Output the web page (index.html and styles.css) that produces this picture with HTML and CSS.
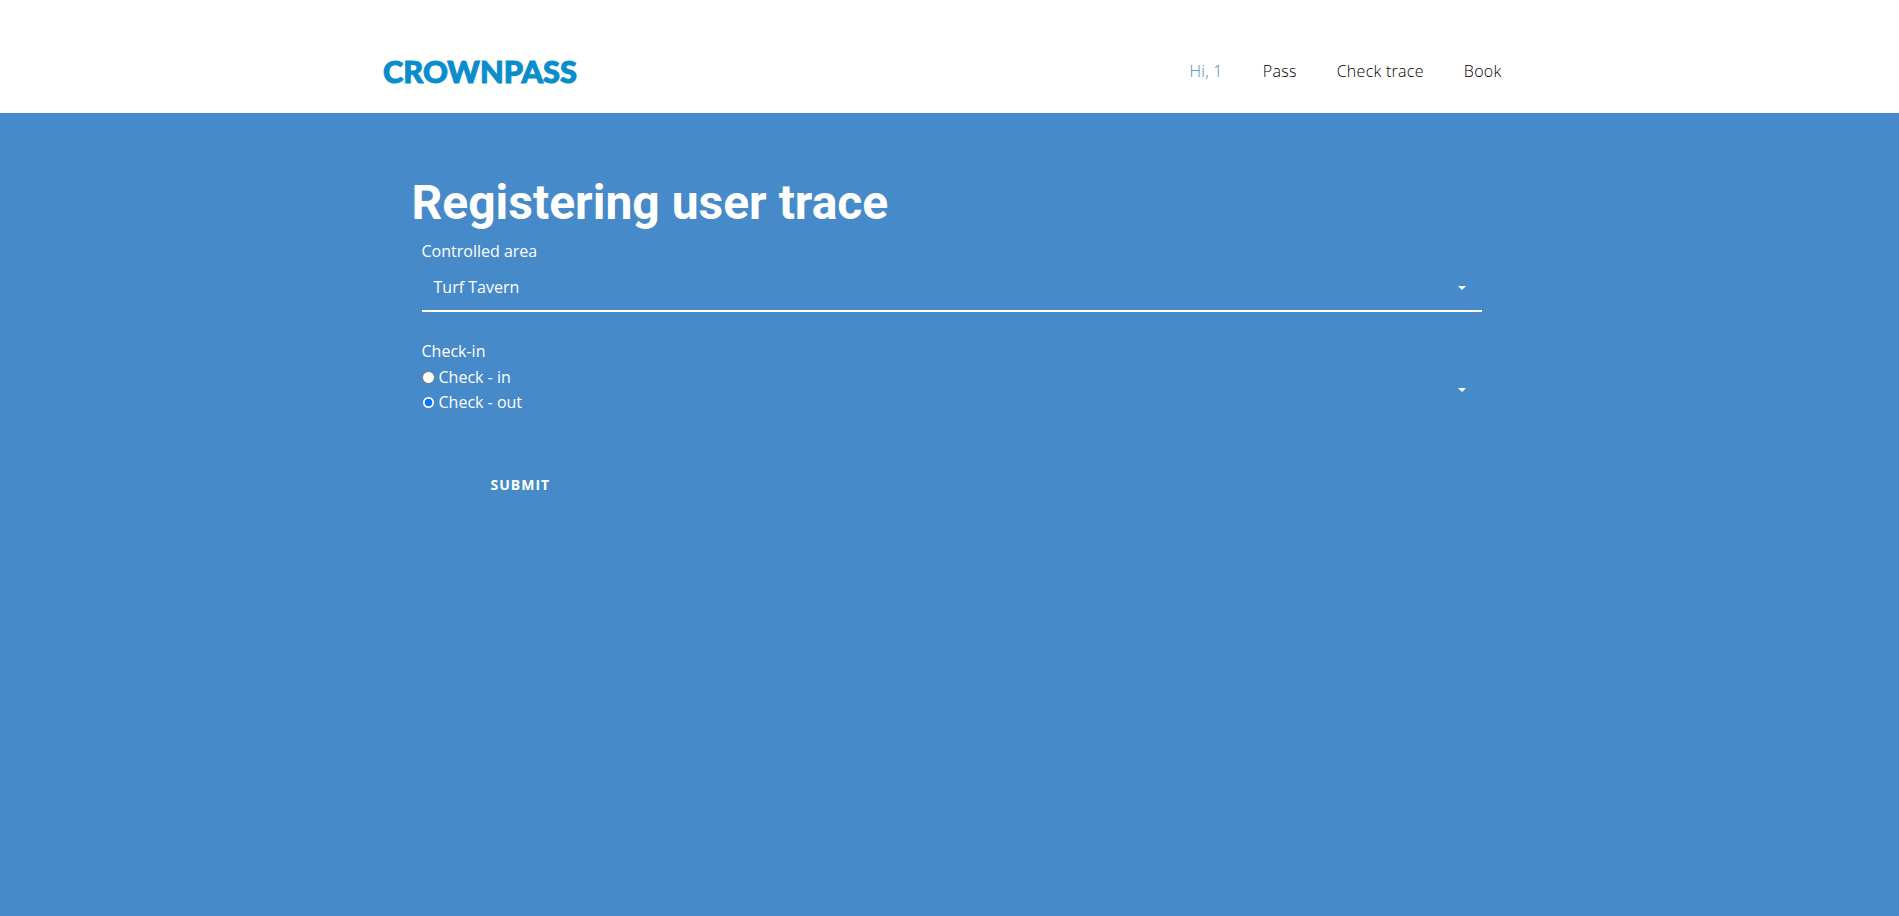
FILE: index.html
```
<!DOCTYPE html>
<html lang="en">
<head>
<meta charset="utf-8">
<title>CrownPass</title>
<link rel="stylesheet" href="styles.css">
</head>
<body>
<header class="header">
  <div class="container header-row">
    <a class="logo" aria-label="CrownPass"><svg width="204" height="56" viewBox="0 0 204 56"><text class="logo-text" x="3" y="38.5" textLength="194" lengthAdjust="spacingAndGlyphs">CROWNPASS</text></svg></a>
    <nav class="nav">
      <a class="nav-link active">Hi, 1</a>
      <a class="nav-link">Pass</a>
      <a class="nav-link">Check trace</a>
      <a class="nav-link">Book</a>
    </nav>
  </div>
</header>
<main class="container main">
  <h1 class="title">Registering user trace</h1>
  <form class="form">
    <div class="label">Controlled area</div>
    <div class="select"><span>Turf Tavern</span><svg class="caret" width="8" height="4" viewBox="0 0 8 4"><path d="M0 0h8L4 4z"/></svg></div>
    <div class="label">Check-in</div>
    <div class="choices">
      <div class="options">
        <label class="option"><input class="radio" type="radio" name="check"><span>Check - in</span></label>
        <label class="option"><input class="radio" type="radio" name="check" checked><span>Check - out</span></label>
      </div>
      <svg class="caret" width="8" height="4" viewBox="0 0 8 4"><path d="M0 0h8L4 4z"/></svg>
    </div>
    <button class="submit" type="button">SUBMIT</button>
  </form>
</main>
</body>
</html>
```
FILE: styles.css
```
* { box-sizing: border-box; }
body {
  margin: 0;
  min-height: 916px;
  background: #478ac9;
  color: #fff;
  font: 16px/25px "Open Sans", sans-serif;
}
.container { width: 1140px; margin: 0 auto; }
.header { height: 113px; background: #fff; }
.header-row {
  display: flex;
  justify-content: space-between;
  align-items: flex-start;
  padding-top: 44px;
}
.logo { display: block; height: 56px; }
.logo svg { display: block; }
.logo-text {
  font: 900 30.5px Lato, sans-serif;
  fill: #098dcd;
  stroke: #098dcd;
  stroke-width: 1px;
}
.nav { display: flex; gap: 40px; padding: 15px 18px 0 0; }
.nav-link { color: #000; font-weight: 360; letter-spacing: 0.28px; }
.nav-link.active { color: #4a7fc4; }
.main { padding: 63px 38px 0 32px; }
.title { margin: 0; font: 700 48px/53px Roboto, sans-serif; }
.form { padding: 10px 0 0 10px; }
.label { height: 26px; }
.select {
  display: flex;
  align-items: center;
  justify-content: space-between;
  height: 47px;
  margin-bottom: 27px;
  padding: 0 16px 0 12px;
  border-bottom: 2px solid #fff;
}
.caret { display: block; fill: #fff; }
.choices {
  display: flex;
  align-items: center;
  justify-content: space-between;
  padding-right: 16px;
}
.option { display: flex; align-items: center; }
.radio {
  appearance: none;
  width: 13px;
  height: 13px;
  margin: 0 4px 1px 0;
  border: 1px solid #767676;
  border-radius: 50%;
  background: #fff;
}
.radio:checked {
  border-color: transparent;
  background: radial-gradient(circle, #0075ff 3.5px, #fff 4.2px) padding-box;
}
.submit {
  display: block;
  margin: 59px 0 0 69px;
  padding: 0;
  border: 0;
  background: none;
  color: #fff;
  font: 700 14px/22.4px "Open Sans", sans-serif;
  letter-spacing: 1px;
}
```
